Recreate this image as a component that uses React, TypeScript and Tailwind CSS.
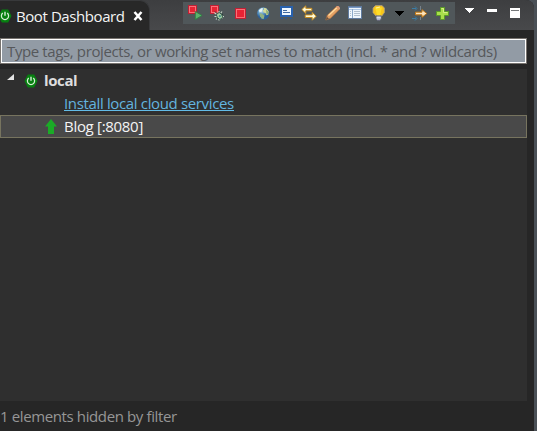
import React from "react";

type IconProps = { className?: string; children: React.ReactNode; crisp?: boolean };

function Icon({ className = "", children, crisp }: IconProps) {
  return (
    <svg
      viewBox="0 0 16 16"
      className={`h-4 w-4 shrink-0 ${className}`}
      shapeRendering={crisp ? "crispEdges" : "auto"}
      fill="none"
    >
      {children}
    </svg>
  );
}

function Boot({ className = "" }: { className?: string }) {
  return (
    <svg viewBox="0 0 14 14" className={`h-3.5 w-3.5 shrink-0 ${className}`} fill="none">
      <path d="M3.8.5h6.4L13.5 7l-3.3 6.5H3.8L.5 7z" fill="#078010" />
      <path d="M4.8 4.1a3.6 3.6 0 1 0 4.4 0" stroke="#d5eed5" strokeWidth="1.25" />
      <path d="M7 2.7v4.1" stroke="#e8f6e8" strokeWidth="1.3" />
    </svg>
  );
}

function Red({ x, y, s }: { x: number; y: number; s: number }) {
  return (
    <>
      <rect x={x + 0.5} y={y + 0.5} width={s - 1} height={s - 1} fill="#e82334" stroke="#c02035" />
      <rect x={x + 1.5} y={y + 1.5} width={s - 3} height={s - 3} stroke="#fb7076" />
    </>
  );
}

function Header() {
  return (
    <header className="flex h-[30px] w-[534px] justify-between bg-gradient-to-b from-[#3d3e40] to-[#48494b]">
      <div className="flex h-[30px] w-[150px] items-center rounded-tr-[10px] border-t border-r border-[#38393b] bg-[#282828]">
        <Boot className="-ml-[2px]" />
        <span className="ml-[4px] w-[111px] whitespace-nowrap pt-px text-[15px] leading-5 tracking-[-0.42px] text-[#f4f4f4]">
          Boot Dashboard
        </span>
        <svg viewBox="0 0 10 10" className="ml-[6px] h-2.5 w-2.5" fill="none">
          <path d="M1.5 1l7 8M8.5 1l-7 8" stroke="#fff" strokeWidth="2.5" />
        </svg>
      </div>
      <div className="flex h-[30px] w-[351px]">
        <div className="mt-[2px] flex h-[22px] w-[272px] items-start bg-[#50575a] pt-[3px] pl-1">
          <Icon>
            <Red x={1} y={0} s={9} />
            <path d="M8.3 6.5v8l6.7-4z" fill="#5db36e" stroke="#28843c" strokeWidth=".8" />
          </Icon>
          <Icon className="ml-[6px]">
            <Red x={1} y={0} s={9} />
            <path d="M5.5 8l8.5 5M13 6.5L7 14.5M10 6v9.5M5.5 11.5h9.5" stroke="#c9dccb" strokeWidth="1.1" />
            <path d="M6 6.5l2 2M14 9l-2 1M8 14l1-2" stroke="#17382f" strokeWidth="1" />
            <ellipse cx="10.5" cy="11" rx="2.6" ry="3.5" fill="#a9cfa4" stroke="#31564b" strokeWidth=".9" transform="rotate(-35 10.5 11)" />
            <circle cx="10.8" cy="11.2" r="1.1" fill="#3f8d8f" />
          </Icon>
          <Icon className="ml-[7px]" crisp>
            <Red x={3} y={3} s={11} />
          </Icon>
          <Icon className="ml-[7px]">
            <defs>
              <radialGradient id="globe" cx=".35" cy=".3">
                <stop stopColor="#c4e0f0" />
                <stop offset=".45" stopColor="#6ba3cc" />
                <stop offset="1" stopColor="#2b609a" />
              </radialGradient>
            </defs>
            <circle cx="8.3" cy="8.5" r="6.2" fill="url(#globe)" />
            <path d="M8.3 2.7l3 .6 2.4 3-.5 3.5-1.7.5-1-2.2-2-.6-.6-2 1.2-1z" fill="#d3d99b" />
            <path d="M11 4.5l2.5 2.5-.7 2.6-1.3.2z" fill="#8fae76" />
            <path d="M4.5 8l2.5.8 2.5 2-.8 3.2-2-.2-1.7-2.6z" fill="#8fb184" />
            <path d="M3.8 5.2l3-2.2 1.2.3-1 3-2.4 1.2z" fill="#e6f3f5" />
          </Icon>
          <Icon className="ml-[8px]" crisp>
            <rect x="1" y="1" width="13" height="11" fill="#2861ad" />
            <rect x="3" y="3" width="9" height="7" fill="#eef7ff" />
            <path d="M4 5.5h4M4 7.5h7" stroke="#416aa1" />
            <path d="M2 13.5h2M6 13.5h2M11 13.5h2" stroke="#255999" />
          </Icon>
          <Icon className="ml-[6px]">
            <path d="M.8 4.5l4-3.7v2.5h6v2.5h-6v2.6z" fill="#fffbd7" stroke="#c58a1b" />
            <path d="M15.2 11.2l-4-3.8v2.5h-7v2.6h7v2.7z" fill="#fffbd7" stroke="#c58a1b" />
          </Icon>
          <Icon className="ml-[8px]">
            <path d="M.8 15l1.6-4.8L11.5 1.5l3 2.7-9 9.1z" fill="#e4a266" stroke="#b9733e" strokeWidth=".7" />
            <path d="M3.5 10.5l8.3-7.8" stroke="#ffdc9e" strokeWidth="1.3" />
            <path d="M.8 15l1.1-3.2 2 2z" fill="#645342" />
            <path d="M11 2l1-1.1h1.5L15 2.4v1.4l-.8.8z" fill="#dd9b77" />
          </Icon>
          <Icon className="ml-[6px]" crisp>
            <rect x="1.5" y="1.5" width="13" height="12" fill="#edf5fc" stroke="#607b9e" />
            <path d="M2 2.5h12" stroke="#7798c5" />
            <path d="M2 4.5h12" stroke="#adc8e7" />
            <path d="M5.5 4v9" stroke="#8ba9ca" />
            <path d="M3 6.5h1M3 8.5h1M3 10.5h1M7 6.5h6M7 8.5h6M7 10.5h6" stroke="#b0bfce" />
          </Icon>
          <Icon className="ml-[8px]">
            <path d="M4.5.6h6.6l2.3 2.4v4.5l-2.6 3.5H4.9L2 7.5V3z" fill="#f7c51b" stroke="#a99a87" strokeWidth=".8" />
            <path d="M4 2.5h7L10 6l-.8 5H6.2L5 6z" fill="#ffdc27" />
            <path d="M5 3l4-1" stroke="#fff59c" strokeWidth="1.2" />
            <path d="M5.2 10.8h5v3.4l-1.5 1.3H6.5l-1.3-1.3z" fill="#adb3c8" stroke="#606174" strokeWidth=".8" />
            <path d="M5.5 12.8h4.3" stroke="#eceef8" />
          </Icon>
          <Icon className="ml-[4px]" crisp>
            <path d="M4 6h9l-4.5 5z" fill="#000" />
          </Icon>
          <Icon className="ml-[5px]">
            <path d="M-1 3.5h5M-1 13.5h5M3 1.5l2 2-2 2M3 11.5l2 2-2 2" stroke="#3b7da6" />
            <path d="M8.5 1v4M8.5 12v3" stroke="#77828b" />
            <path d="M3.5 7.2H10V4.7l4.8 3.8-4.8 3.8V9.8H3.5z" fill="#fbe3bd" stroke="#c77a12" />
          </Icon>
          <Icon className="ml-[6px]">
            <path d="M6.5 2.5h4v4h4v4h-4v4h-4v-4h-4v-4h4z" fill="#a9df4b" stroke="#5b9b27" />
            <path d="M7.5 3.5h2v4h4" stroke="#d5ef85" />
          </Icon>
        </div>
        <div className="flex pt-[5px] pl-[5px]">
          <Icon crisp>
            <path d="M4 3h10l-5 5z" fill="#fff" />
          </Icon>
          <Icon className="ml-[8px]" crisp>
            <rect x="3" y="4" width="10" height="3" fill="#fff" />
          </Icon>
          <Icon className="ml-[7px]" crisp>
            <rect x="3" y="3" width="10" height="10" fill="#fff" />
            <path d="M4 5.5h8" stroke="#77797b" />
          </Icon>
        </div>
      </div>
    </header>
  );
}

export default function App() {
  return (
    <main className="h-[431px] w-[537px] overflow-hidden bg-[#4a5056] font-['Open_Sans','Noto_Sans',sans-serif]">
      <div className="h-[431px] w-[534px] overflow-hidden rounded-tr-[8px] bg-[#262626]">
        <Header />
        <div className="mt-2 h-[26px] w-[527px] border border-[#77736f]">
          <div className="flex h-6 items-center border border-white bg-[#929ba5] pl-[5px]">
            <span className="whitespace-nowrap text-[15px] leading-5 tracking-[-0.38px] text-[#56585b]">
              Type tags, projects, or working set names to match (incl. * and ? wildcards)
            </span>
          </div>
        </div>
        <section className="mt-[5px] h-[332px] w-[527px] bg-[#2f2f2f] text-[15px] leading-5">
          <div className="flex h-[23px] items-center">
            <svg viewBox="0 0 8 7" className="mb-[6px] ml-[7px] h-[7px] w-2">
              <path d="M7 0v6H0z" fill="#e4e4e4" />
            </svg>
            <Boot className="ml-[9px]" />
            <span className="mb-[2px] ml-[6px] text-[15px] font-bold tracking-[-0.4px] text-[#dedede]">local</span>
          </div>
          <div className="flex h-[23px] items-start pl-16">
            <span className="h-[19px] w-[170px] whitespace-nowrap border-b border-[#63bce7] leading-[23px] tracking-[-0.35px] text-[#63b4df]">
              Install local cloud services
            </span>
          </div>
          <div className="flex h-[23px] items-center border border-[#77745f] bg-[#494949]">
            <svg viewBox="0 0 12 15" className="ml-[44px] h-[15px] w-3">
              <path d="M6 0l6 7.5H9V15H3V7.5H0z" fill="#1bab27" />
            </svg>
            <span className="mb-[2px] ml-[7px] whitespace-nowrap tracking-[-0.3px] text-[#f4f4f4]">Blog [:8080]</span>
          </div>
        </section>
        <footer className="flex h-[30px] items-center text-[15px] leading-5 tracking-[-0.38px] text-[#969696]">
          1 elements hidden by filter
        </footer>
      </div>
    </main>
  );
}
